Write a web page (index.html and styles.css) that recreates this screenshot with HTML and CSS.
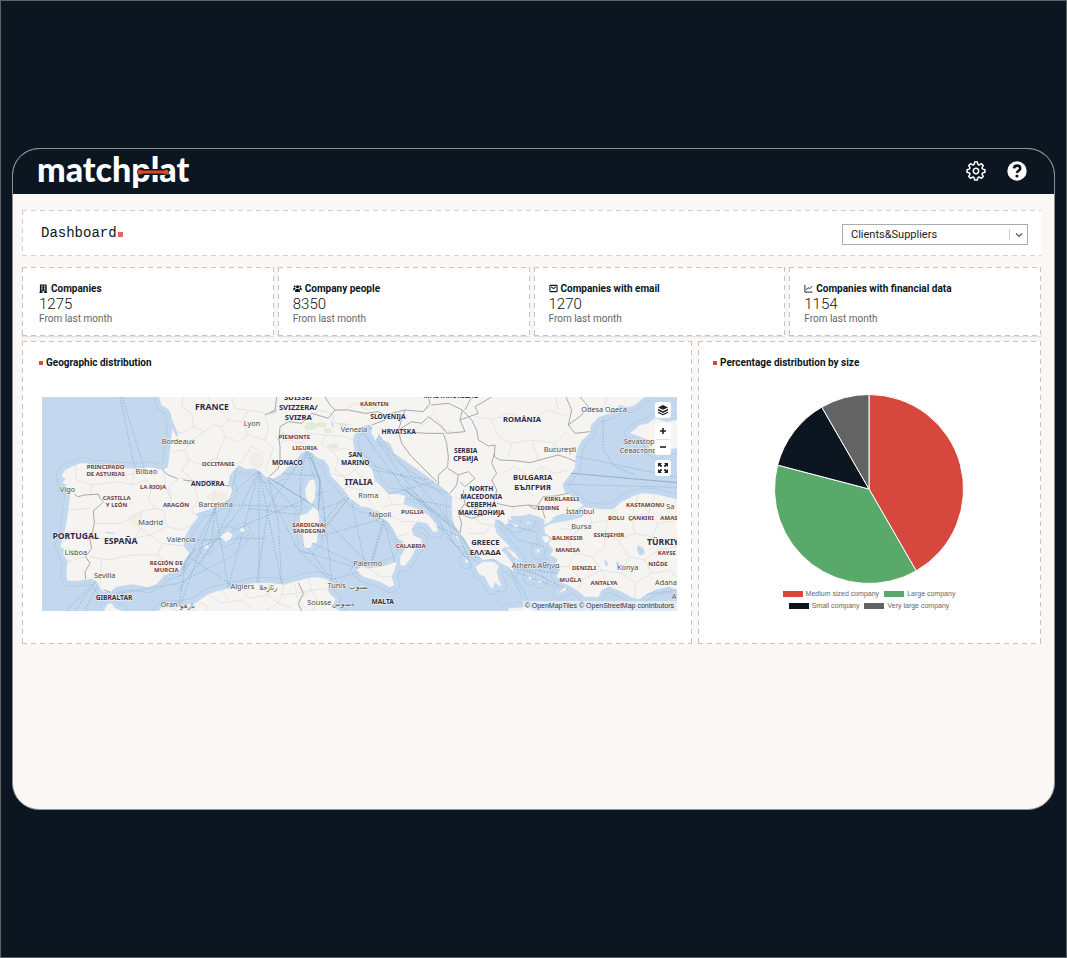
FILE: index.html
```html
<!DOCTYPE html>
<html lang="en">
<head>
<meta charset="utf-8">
<title>Matchplat – Dashboard</title>
<meta name="viewport" content="width=device-width, initial-scale=1">
<link rel="stylesheet" href="styles.css">
</head>
<body>
<div class="window">
  <header class="topbar">
    <a class="logo" href="#">matchplat
      <svg class="logo-link" viewBox="0 0 34 8" aria-hidden="true"><path class="logo-gap" d="M4 4H30"/><path class="logo-bar" d="M4 4H30"/><circle cx="4" cy="4" r="2.6"/><circle cx="30" cy="4" r="2.6"/></svg>
    </a>
    <nav class="tools">
      <button class="tool" type="button" aria-label="Settings">
        <svg viewBox="-10 -10 20 20" class="gear">
          <defs><path id="tooth" d="M-2.6-6.3Q-1.9-6.5-1.7-7.2L-1.3-9H1.3L1.7-7.2Q1.9-6.5 2.6-6.3"/></defs>
          <use href="#tooth"/><use href="#tooth" transform="rotate(45)"/><use href="#tooth" transform="rotate(90)"/><use href="#tooth" transform="rotate(135)"/><use href="#tooth" transform="rotate(180)"/><use href="#tooth" transform="rotate(225)"/><use href="#tooth" transform="rotate(270)"/><use href="#tooth" transform="rotate(315)"/>
          <circle r="2.7"/>
        </svg>
      </button>
      <button class="tool" type="button" aria-label="Help">
        <svg viewBox="-10 -10 20 20"><circle r="9.7" fill="#fff"/><path d="M-3-2.6C-2.8-6.3 3.2-6.3 3.2-2.6C3.2-.2 0-.3 0 2" fill="none" stroke="#0b1620" stroke-width="2.6"/><circle cy="5" r="1.6" fill="#0b1620"/></svg>
      </button>
    </nav>
  </header>

  <main class="content">
    <section class="titlebar dashed">
      <h1 class="page-title">Dashboard<span class="title-dot"></span></h1>
      <div class="picker">
        <select class="picker-select" aria-label="Company list"><option>Clients&amp;Suppliers</option></select>
        <svg class="picker-arrow" viewBox="0 0 20 21" aria-hidden="true"><path d="M1.500 5V16" stroke="#ccc"/><path d="M8 9.500L11 12.500L14 9.500" stroke="#555" stroke-width="1.200"/></svg>
      </div>
    </section>

    <section class="stats">
      <article class="stat dashed">
        <h2 class="label"><svg class="icon" viewBox="0 0 10 10"><path fill-rule="evenodd" d="M1 .5H8.500V9H9V10H5.800V8H3.800V10H.5V9H1ZM2.600 1.800V3H4V1.800ZM5.500 1.800V3H7V1.800ZM2.600 4V5.200H4V4ZM5.500 4V5.200H7V4ZM2.600 6.200V7.300H4V6.200ZM5.500 6.200V7.300H7V6.200Z"/></svg>Companies</h2>
        <p class="value">1275</p><p class="note">From last month</p>
      </article>
      <article class="stat dashed">
        <h2 class="label"><svg class="icon" viewBox="0 0 10 10"><circle cx="5" cy="3" r="1.700"/><circle cx="1.900" cy="2.700" r="1.100"/><circle cx="8.100" cy="2.700" r="1.100"/><path d="M2.300 9V7.200Q2.300 5.200 5 5.200T7.700 7.200V9ZM.2 7V5.600Q.3 4.200 2.500 4.300L3 4.900Q1.700 5.600 1.700 7ZM9.800 7V5.600Q9.700 4.200 7.500 4.300L7 4.900Q8.300 5.600 8.300 7Z"/></svg>Company people</h2>
        <p class="value">8350</p><p class="note">From last month</p>
      </article>
      <article class="stat dashed">
        <h2 class="label"><svg class="icon icon-line" viewBox="0 0 10 10"><rect x="1" y="1.500" width="8" height="7" rx=".6"/><path d="M2.500 3.200L5 5.200L7.500 3.200"/></svg>Companies with email</h2>
        <p class="value">1270</p><p class="note">From last month</p>
      </article>
      <article class="stat dashed">
        <h2 class="label"><svg class="icon icon-line icon-thin" viewBox="0 0 10 10"><path d="M1 1V9H9.500M2.500 6.500L4.500 4L6.300 5.300L9 2.500"/></svg>Companies with financial data</h2>
        <p class="value">1154</p><p class="note">From last month</p>
      </article>
    </section>

    <section class="panels">
      <article class="panel dashed">
        <h2 class="label"><span class="bullet"></span>Geographic distribution</h2>
        <div class="map">
          <svg class="map-canvas" viewBox="21 21 1905 642" preserveAspectRatio="xMidYMid slice" role="img" aria-label="Map of southern Europe">
            <defs>
              <path id="mainland" d="M372 21L380 45L400 58L408 72L412 115L408 150L404 190L398 232L385 240L345 232L300 236L250 232L215 228L170 228L155 220L138 220L115 228L90 240L80 258L92 266L82 278L95 285L90 296L102 298L105 320L100 360L92 410L84 445L76 470L88 478L84 492L98 512L95 535L95 562L98 572L120 573L150 570L170 566L185 575L195 595L205 606L225 606L245 590L290 583L340 592L365 582L390 555L435 540L445 515L464 490L445 468L450 440L470 405L490 380L480 372L540 352L585 325L592 300L580 280L585 255L600 238L612 226L630 236L660 236L675 245L692 262L715 266L740 252L762 228L785 210L798 190L815 183L832 190L850 205L868 210L882 230L885 255L905 275L925 298L945 325L980 350L1000 352L1018 362L1030 362L1040 385L1060 395L1075 418L1088 445L1105 455L1110 478L1096 500L1095 525L1110 528L1130 500L1140 478L1160 465L1160 448L1135 436L1130 418L1145 395L1175 400L1195 425L1208 425L1205 405L1180 375L1150 358L1105 342L1112 318L1090 312L1060 312L1035 285L1020 272L1012 240L985 212L960 190L955 160L955 140L975 112L1000 104L1012 110L1008 128L1022 152L1032 130L1045 150L1065 160L1078 190L1110 212L1150 240L1180 262L1212 285L1240 308L1252 320L1250 350L1252 385L1258 405L1275 432L1290 448L1300 468L1325 495L1345 510L1375 506L1398 520L1418 530L1435 545L1432 520L1412 492L1398 480L1410 470L1425 472L1405 450L1385 430L1378 405L1382 388L1398 392L1410 405L1420 400L1418 385L1432 392L1425 378L1455 378L1485 372L1510 380L1530 390L1525 405L1545 395L1565 378L1600 368L1635 355L1645 345L1620 325L1590 305L1582 285L1600 260L1620 235L1622 200L1630 170L1640 152L1665 130L1668 105L1690 82L1740 65L1755 45L1780 52L1800 45L1818 30L1830 21Z"/>
              <path id="anatolia" d="M1648 352L1700 358L1735 358L1760 335L1795 318L1820 310L1860 312L1926 328V600L1900 590L1860 600L1835 612L1812 628L1790 622L1760 605L1722 590L1700 600L1690 622L1650 620L1625 600L1600 585L1580 578L1565 558L1575 540L1560 525L1568 508L1545 495L1555 480L1540 462L1552 445L1530 430L1528 412L1545 402L1580 395L1620 388L1640 380L1610 372Z"/>
              <path id="africa" d="M370 663L385 648L430 650L480 640L520 612L560 600L600 592L650 580L700 578L745 584L790 572L820 564L850 562L880 570L890 580L876 598L888 615L902 628L892 648L915 663ZM208 663L215 645L228 638L240 655L262 663Z"/>
              <path id="islands" d="M822 272L838 268L842 290L840 325L830 342L815 330L810 300ZM795 375L815 372L835 352L850 362L853 385L848 430L845 458L832 460L825 475L808 472L803 430L795 400ZM965 540L978 530L1000 535L1040 530L1085 515L1078 540L1070 560L1078 585L1065 592L1035 575L985 560ZM555 440L578 424L592 432L588 446L572 455ZM508 470L518 465L520 472L510 478ZM614 418L625 414L630 422L620 426ZM1322 530L1345 515L1375 515L1392 528L1385 545L1390 565L1400 590L1385 582L1380 575L1372 598L1360 582L1350 560L1332 552ZM1264 435L1275 455L1262 442ZM1290 505L1302 515L1292 520ZM1435 505L1460 525L1450 522ZM1410 470L1440 490L1455 512L1435 500ZM1520 440L1538 438L1545 452L1530 458ZM1505 475L1515 480L1508 492ZM1528 522L1545 528L1530 532ZM1480 560L1490 562L1484 570ZM1510 570L1520 575L1512 580ZM1570 610L1590 592L1595 600ZM1420 655L1470 652L1500 660L1490 668L1420 668ZM1785 130L1815 105L1840 100L1860 85L1895 95L1926 90V175L1890 178L1865 190L1845 178L1840 150L1815 140ZM1435 400L1450 410L1440 412ZM1475 395L1485 398L1478 404Z"/>
            </defs>
            <path class="sea" d="M0 0H1950V700H0Z"/>
            <g class="shelf"><use href="#mainland"/><use href="#anatolia"/><use href="#africa"/><use href="#islands"/></g>
            <g class="shelf-fill"><use href="#mainland"/><use href="#anatolia"/><use href="#africa"/><use href="#islands"/></g>
            <g class="ferry">
              <path d="M255 21L300 236M262 21L328 236M180 575L95 663M185 572L120 663M190 580L150 663M605 232L585 330L540 355L430 663M672 240L540 355L445 540M672 240V578M672 240L740 580M672 240L620 350L430 600M672 240L580 590M592 345L800 350M592 345L540 450L490 530M540 355L530 450L430 560M540 355L580 590M480 450L560 448L690 445M462 492L640 400L880 300M462 500L590 585M450 520L430 663M250 610L430 580L590 500L660 430"/>
              <path d="M672 245L835 345M672 245L845 258M680 250L795 370M700 262L730 400L740 580M815 185L795 260L800 370M815 185L838 265M820 185L855 270L850 370M815 185L700 350L665 578M830 190L860 300L890 570M940 325L855 360M940 325L850 440M940 325L820 475M1045 385L855 440M1045 385L1008 520M1050 385L1010 525M1045 390L1080 520M1045 385L1095 470M835 460L980 530M820 475L890 570M990 540L880 572M990 540L790 480M800 375L640 355M670 245L790 480L880 565M850 370L1000 520M950 340L990 520M930 320L800 470"/>
              <path d="M1000 105L1275 430M1005 115L1080 230L1290 500M1010 225L1240 310M1015 240L1180 270M1060 312L1200 275M1090 320L1250 350M985 130L1110 300L1280 420M1115 290L1275 430M1205 405L1300 510M1210 410L1275 440L1310 530M1320 500L1400 515M1400 400L1500 425M1385 390L1450 450L1530 470M1420 530L1570 550M1420 530L1500 550L1600 600M1420 530L1460 620M1430 540L1490 650M1440 545L1560 590M1425 525L1600 540M1705 90L1705 180L1740 230L1800 255M1625 200L1926 262M1590 248L1926 278M1590 283L1926 292M1800 618L1926 600"/>
            </g>
            <g class="ferry-strong"><path d="M672 245L835 345M820 185L855 270L850 370M1110 300L1275 430M464 492L440 540M1590 248L1926 278M1275 430L1310 490"/></g>
            <g class="land"><use href="#mainland"/><use href="#anatolia"/><use href="#africa"/><use href="#islands"/></g>
            <g class="green"><ellipse cx="828" cy="108" rx="18" ry="12"/><ellipse cx="860" cy="104" rx="15" ry="7"/><ellipse cx="895" cy="168" rx="16" ry="8"/><ellipse cx="878" cy="122" rx="12" ry="7"/><ellipse cx="925" cy="105" rx="14" ry="6"/></g>
            <g class="city-area"><ellipse cx="300" cy="390" rx="15" ry="22"/><ellipse cx="545" cy="320" rx="35" ry="14"/><ellipse cx="665" cy="210" rx="22" ry="25"/></g>
            <path class="water" d="M700 75L715 62L728 58L722 68ZM888 92L893 95L897 115L890 108ZM1165 62L1190 45L1195 35L1180 55ZM1810 465L1825 475L1830 490L1815 497L1805 480ZM1710 508L1720 520L1716 532L1708 520ZM1740 520L1752 515L1750 530ZM210 425L240 428L238 432L212 430ZM408 80L430 135L425 140L412 118ZM1548 385L1580 372L1620 365L1650 372L1640 382L1600 390Z"/>
            <g class="province">
              <path d="M412 120L440 130L475 110L470 70L440 50L445 21M475 110L510 125L530 105L560 110L580 90L560 60L530 55L520 21M580 90L620 95L640 60L690 70M560 110L570 140L610 155L640 135L690 150M410 185L450 180L470 150L510 125M450 180L460 210L500 225L545 205L570 140M545 205L590 225L620 215L650 170L690 190M460 210L440 240L470 268M620 95L640 135M690 70L700 120L690 150L715 175L690 240M590 21L600 55L640 60"/>
              <path d="M120 225L125 270L170 285L165 310M170 285L250 275L290 285L300 236M165 250L230 262L300 250M290 285L335 270L350 290L370 280L395 300L385 240M350 290L340 330L360 355L320 365L260 400L185 400M335 270L320 250M395 300L410 330L385 360L395 410L440 420L470 405M360 355L385 360M410 330L400 290L440 262M320 365L310 410L345 435L395 410M170 440L230 450L300 445L345 435L380 460L445 468M380 460L370 495L400 530L445 515M165 500L220 510L290 495L370 495M400 530L380 565M98 360L165 355M92 425L145 425L160 440M98 515L150 500M440 262L480 290L490 330L470 360L480 375M540 300L530 350M200 510L195 595M300 445L320 410"/>
              <path d="M785 80L830 85L850 60L890 70L900 100L950 105M730 160L760 150L800 160L820 130L870 135L930 140L955 150M800 160L790 190M820 130L790 80M885 185L930 175L960 190M870 135L860 160L895 185L910 210L900 240L930 260L960 240L985 212M885 250L930 260L940 290L920 300M960 240L985 265L1010 265M940 290L980 300L1000 330L1035 310M1000 330L1020 360M1060 312L1070 345L1110 342M1040 380L1075 380L1100 395L1140 395M1070 345L1045 350M1085 440L1120 430M1095 470L1140 475M930 60L960 40L1000 60L1030 50M800 400H850M1000 535L1040 560L1070 560M1150 110L1180 95L1200 60"/>
              <path d="M1320 80L1370 90L1420 70L1480 90L1540 60L1600 80M1370 90L1390 140L1430 160L1490 150L1560 160L1600 120M1430 160L1420 200M1490 150L1510 210M1560 160L1570 200M1400 250L1440 230L1480 260L1520 230L1560 250L1600 240M1480 260L1470 300L1500 320M1520 230L1540 290M1310 380L1340 400L1380 410M1300 430L1350 430L1370 400M1310 470L1360 460L1390 480M1440 370L1430 350M1200 80L1230 120L1270 130M1255 200L1310 210M1260 320L1300 340M1720 21L1700 60M1560 21L1570 60"/>
              <path d="M1660 360L1670 400L1630 420L1570 415M1670 400L1720 390L1740 360M1720 390L1710 430L1750 450L1800 430L1790 380L1810 315M1790 380L1840 370L1860 315M1840 370L1870 400L1926 390M1870 400L1850 440L1800 430M1850 440L1870 480L1926 470M1870 480L1830 510L1850 550L1900 540L1926 560M1830 510L1780 500L1750 450M1780 500L1760 550L1800 580L1850 550M1760 550L1700 540L1670 500L1710 470L1710 430M1670 500L1620 490L1600 450L1630 420M1620 490L1600 530L1565 530M1600 530L1640 570L1700 540M1640 570L1630 600M1700 540L1720 590M1800 580L1800 620M1600 450L1550 450"/>
              <path d="M400 650L430 663M450 645L480 663M490 635L520 650L510 663M520 612L560 640L620 630L650 655M560 600L580 630M620 590L640 625L700 615L730 640L690 663M700 580V615M745 584L740 615L780 610L800 640M740 615L730 640L770 655M820 564L830 600L800 620M830 600L870 595M830 600L850 640L890 640M850 640L830 663M800 640L820 663M780 580L785 610L830 600"/>
            </g>
            <g class="border">
              <path d="M118 312L128 320L150 315L190 312L195 325L205 335L190 350L175 362L178 400L172 430L165 450L170 475L152 500L165 520L150 545L152 568M382 240L400 255L428 266M445 270L490 275L540 272L560 285L585 288M700 262L730 235L735 205L735 170L732 150L735 110L760 95L800 100L830 70L880 85L900 60L940 60L990 70L1030 65L1050 75L1050 90L1010 105M690 75L720 60L725 21M728 150L745 130M870 21L885 45L900 60M1050 75L1110 60L1165 65L1185 40L1180 21M1110 60L1090 120L1045 125M1090 120L1130 95L1160 100L1180 80L1220 110L1235 130L1290 125L1275 90L1282 60L1240 40L1190 45M1092 130L1100 160L1130 200L1170 240L1205 275M1095 130L1140 128L1180 130L1225 130L1235 160L1240 200L1238 230L1210 255L1210 285M1238 235L1270 255L1265 285L1245 310M1270 255L1300 245L1320 265L1290 290L1275 275M1285 300L1290 340L1270 370L1280 400L1275 430M1290 345L1320 355L1375 345L1385 300L1370 270M1270 370L1310 385L1345 375L1375 345M1282 60L1310 90L1325 120L1330 150L1360 168L1380 165L1378 200L1395 210L1440 212L1485 218L1520 208L1570 195L1600 205L1622 215M1378 190L1370 220L1385 250L1370 270M1385 340L1430 350L1480 345L1500 358L1525 320L1560 318L1600 310M1480 345L1520 350L1530 385M1593 21L1610 60L1600 105L1620 130L1665 125M1600 105L1640 75L1660 50L1635 21M1275 90L1330 70L1320 50L1370 21"/>
              <path d="M790 578L805 610L790 640L800 663M205 600L225 606M1310 20L1290 60"/>
            </g>
            <g class="country">
              <text class="big" x="531" y="59">FRANCE</text><text class="big" x="122" y="446">PORTUGAL</text><text class="big" x="257" y="463">ESPAÑA</text><text class="big" x="971" y="284">ITALIA</text>
              <text x="237" y="629">GIBRALTAR</text><text x="518" y="288">ANDORRA</text><text x="757" y="225">MONACO</text>
              <text class="mid" x="790" y="31">SUISSE/</text><text class="mid" x="790" y="60">SVIZZERA/</text><text class="mid" x="790" y="91">SVIZRA</text>
              <text x="961" y="201">SAN</text><text x="961" y="225">MARINO</text><text x="1059" y="86">SLOVENIJA</text><text x="1091" y="131">HRVATSKA</text><text x="1043" y="641">MALTA</text><text x="1248" y="24">MAGYARORSZÁG</text>
              <text x="1292" y="189">SERBIA</text><text x="1292" y="213">СРБИЈА</text><text class="mid" x="1461" y="95">ROMÂNIA</text>
              <text class="mid" x="1493" y="271">BULGARIA</text><text class="mid" x="1493" y="299">БЪЛГРИЯ</text>
              <text x="1339" y="302">NORTH</text><text x="1339" y="327">MACEDONIA</text><text x="1339" y="351">СЕВЕРНА</text><text x="1339" y="375">МАКЕДОНИЈА</text>
              <text class="mid" x="1351" y="466">GREECE</text><text class="mid" x="1351" y="496">ΕΛΛΆΔΑ</text><text class="big" x="1836" y="466" text-anchor="start">TÜRKIYE</text>
            </g>
            <g class="region">
              <text x="212" y="238">PRINCIPADO</text><text x="212" y="257">DE ASTURIAS</text><text x="354" y="298">LA RIOJA</text><text x="245" y="331">CASTILLA</text><text x="245" y="350">Y LEÓN</text><text x="423" y="351">ARAGÓN</text><text x="550" y="228">OCCITANIE</text><text x="394" y="526">REGIÓN DE</text><text x="394" y="545">MURCIA</text>
              <text x="1018" y="47">KÄRNTEN</text><text x="778" y="147">PIEMONTE</text><text x="809" y="181">LIGURIA</text><text x="823" y="410">SARDIGNA/</text><text x="823" y="430">SARDEGNA</text><text x="1132" y="372">PUGLIA</text><text x="1127" y="475">CALABRIA</text>
              <text x="1580" y="332">KIRKLARELI</text><text x="1540" y="361">EDIRNE</text><text x="1831" y="351">KASTAMONU</text><text x="1744" y="391">BOLU</text><text x="1818" y="389">ÇANKIRI</text><text x="1876" y="389" text-anchor="start">AMAS</text><text x="1597" y="449">BALIKESIR</text><text x="1722" y="442">ESKIŞEHIR</text><text x="1598" y="486">MANISA</text><text x="1647" y="540">DENIZLI</text><text x="1606" y="575">MUĞLA</text><text x="1707" y="586">ANTALYA</text><text x="1869" y="528">NIĞDE</text><text x="1868" y="496" text-anchor="start">KAYSE</text>
            </g>
            <g class="city">
              <text x="651" y="108">Lyon</text><text x="430" y="162">Bordeaux</text><text x="334" y="252">Bilbao</text><text x="98" y="305">Vigo</text><text x="542" y="352">Barcelona</text><text x="347" y="404">Madrid</text><text x="438" y="455">València</text><text x="123" y="495">Lisboa</text><text x="209" y="565">Sevilla</text>
              <text x="402" y="651">Oran</text><text x="458" y="654">نارهو</text><text x="622" y="597">Algiers</text><text x="700" y="600">رئازجلا</text><text x="905" y="595">Tunis</text><text x="969" y="598">سنوت</text><text x="853" y="644">Sousse</text><text x="925" y="647">ةسوس</text>
              <text x="957" y="127">Venezia</text><text x="1000" y="323">Roma</text><text x="1035" y="382">Napoli</text><text x="998" y="527">Palermo</text>
              <text x="1707" y="65">Odesa Одеса</text><text x="1575" y="186">București</text><text x="1766" y="162" text-anchor="start">Sevastop</text><text x="1754" y="189" text-anchor="start">Севастопо</text><text x="1635" y="373">İstanbul</text><text x="1639" y="417">Bursa</text><text x="1502" y="534">Athens Αθήνα</text><text x="1778" y="540">Konya</text><text x="1893" y="586">Adana</text><text x="1894" y="356" text-anchor="start">Sa</text><text x="1910" y="626" text-anchor="start">A</text>
            </g>
          </svg>
          <div class="map-controls">
            <button class="map-btn" type="button" aria-label="Layers"><svg viewBox="0 0 16 16"><path d="M8 3L13 5.400L8 7.800L3 5.400ZM3 6.800L8 9.200L13 6.800V8.500L8 10.900L3 8.500ZM3 9.800L8 12.100L13 9.800V10.900L8 13.300L3 10.900Z"/></svg></button>
            <div class="map-zoom">
              <button class="map-btn" type="button" aria-label="Zoom in"><svg viewBox="0 0 16 16"><path d="M7.200 5H8.800V7.200H11V8.800H8.800V11H7.200V8.800H5V7.200H7.200Z"/></svg></button>
              <button class="map-btn" type="button" aria-label="Zoom out"><svg viewBox="0 0 16 16"><path d="M5 6.200H11V7.800H5Z"/></svg></button>
            </div>
            <button class="map-btn" type="button" aria-label="Full screen"><svg viewBox="0 0 16 16"><path d="M3 3H7L5.700 4.300L7.300 6L6 7.300L4.300 5.700L3 7ZM13 3V7L11.700 5.700L10 7.300L8.700 6L10.300 4.300L9 3ZM3 13V9L4.300 10.300L6 8.700L7.300 10L5.700 11.700L7 13ZM13 13H9L10.300 11.700L8.700 10L10 8.700L11.700 10.300L13 9Z"/></svg></button>
          </div>
          <p class="map-credit"><a href="#">© OpenMapTiles</a> <a href="#">© OpenStreetMap contributors</a></p>
        </div>
      </article>

      <article class="panel panel-chart dashed">
        <h2 class="label"><span class="bullet"></span>Percentage distribution by size</h2>
        <svg class="pie" viewBox="-95 -95 190 190" role="img" aria-label="Share of companies by size">
          <path fill="#d6483d" d="M0 0V-94.500A94.500 94.500 0 0 1 47.200 81.900Z"/>
          <path fill="#59a96a" d="M0 0L47.200 81.900A94.500 94.500 0 0 1 -91.400 -23.900Z"/>
          <path fill="#0b1620" d="M0 0L-91.400 -23.900A94.500 94.500 0 0 1 -47.200 -81.900Z"/>
          <path fill="#636363" d="M0 0L-47.200 -81.900A94.500 94.500 0 0 1 0 -94.500Z"/>
        </svg>
        <ul class="legend">
          <li><span class="swatch red"></span>Medium sized company</li><li><span class="swatch green-sw"></span>Large company</li>
        </ul>
        <ul class="legend">
          <li><span class="swatch navy"></span>Small company</li><li><span class="swatch grey"></span>Very large company</li>
        </ul>
      </article>
    </section>
  </main>
</div>
</body>
</html>
```
FILE: styles.css
```css
* { box-sizing: border-box; }
body {
  margin: 0;
  min-height: 100vh;
  padding: 11px;
  display: flex;
  align-items: center;
  background: #0b1620;
  border: 1px solid #5d6166;
  color: #0b1620;
  font-family: Roboto, "Liberation Sans", sans-serif;
}
h1, h2, p, ul { margin: 0; padding: 0; }
button { padding: 0; border: 0; background: none; cursor: pointer; }
a { color: inherit; text-decoration: none; }

.window {
  flex: 1;
  min-height: 662px;
  border: 1px solid #8d9196;
  border-radius: 27px;
  overflow: hidden;
  background: #fbf7f4;
}
.topbar {
  display: flex;
  align-items: center;
  justify-content: space-between;
  height: 45px;
  padding: 0 27px 2px 24px;
  background: #0b1620;
}
.logo {
  position: relative;
  margin-bottom: 4px;
  color: #fff;
  font: 900 34px/40px Lato, "Open Sans", sans-serif;
}
.logo-link {
  position: absolute;
  right: 19px;
  top: 19px;
  width: 34px;
  height: 8px;
  overflow: visible;
  fill: #d9482b;
}
.logo-gap { stroke: #0b1620; stroke-width: 6; stroke-linecap: round; }
.logo-bar { stroke: #d9482b; stroke-width: 3; }
.tools { display: flex; gap: 21px; }
.tool { display: flex; width: 20px; height: 20px; }
.tool svg { width: 20px; height: 20px; }
.gear { fill: none; stroke: #fff; stroke-width: 1.5; stroke-linecap: round; stroke-linejoin: round; }

.content { padding: 16px 13px 16px 9px; }
.dashed {
  --dash: #c4c4c4;
  --dash-right: var(--dash);
  background:
    repeating-linear-gradient(90deg, var(--dash) 0 5px, transparent 5px 9px) 0 0 / 100% 1px no-repeat,
    repeating-linear-gradient(90deg, var(--dash) 0 5px, transparent 5px 9px) 0 100% / 100% 1px no-repeat,
    repeating-linear-gradient(var(--dash) 0 5px, transparent 5px 9px) 0 0 / 1px 100% no-repeat,
    repeating-linear-gradient(var(--dash-right) 0 5px, transparent 5px 9px) 100% 0 / 1px 100% no-repeat,
    #fff;
}

.titlebar {
  --dash: #d3d0ce;
  --dash-right: transparent;
  display: flex;
  align-items: center;
  justify-content: space-between;
  height: 46px;
  padding: 2px 13px 0 19px;
}
.page-title { margin-bottom: 2px; font: 400 14px/20px "Liberation Mono", monospace; }
.title-dot {
  display: inline-block;
  width: 5px;
  height: 5px;
  margin-left: 1px;
  background: #e06666;
}
.picker { position: relative; width: 186px; }
.picker-select {
  display: block;
  width: 100%;
  height: 21px;
  padding: 0 24px 0 8px;
  appearance: none;
  background: #fff;
  border: 1px solid #a9adb0;
  border-radius: 0;
  color: #222;
  font: 400 11px/19px Roboto, sans-serif;
}
.picker-arrow {
  position: absolute;
  right: 0;
  top: 0;
  width: 20px;
  height: 21px;
  fill: none;
  pointer-events: none;
}

.stats {
  display: grid;
  grid-template-columns: repeat(4, 1fr);
  gap: 4px;
  margin-top: 11px;
}
.stat { padding: 14px 17px 10px; box-shadow: 0 1px 1px #e4e0dd; }
.stat + .stat { padding-left: 15px; }
.label {
  display: flex;
  align-items: center;
  font-size: 10px;
  font-weight: 700;
  line-height: 15px;
}
.icon { width: 9px; height: 9px; margin-right: 3px; fill: #0b1620; }
.icon-line { fill: none; stroke: #0b1620; stroke-width: 1.2; }
.icon-thin { stroke-width: 1; }
.value { font-size: 15px; font-weight: 300; line-height: 16px; color: #111; }
.note { font-size: 10px; line-height: 14px; color: #666; }

.panels {
  display: grid;
  grid-template-columns: 670fr 343fr;
  gap: 6px;
  margin-top: 5px;
}
.panel { padding: 14px 15px 33px 17px; }
.panel-chart { padding: 14px 16px 16px 15px; }
.bullet { width: 4px; height: 4px; margin-right: 3px; background: #d9483b; }
.map {
  position: relative;
  aspect-ratio: 635 / 214;
  margin: 27px 0 0 3px;
  overflow: hidden;
}
.map-canvas { display: block; width: 100%; height: 100%; }
.sea, .water { fill: #c3d8ee; }
.land { fill: #f5f4f0; }
.shelf { fill: none; stroke: #adc7e4; stroke-width: 34; stroke-linejoin: round; }
.shelf-fill { fill: none; stroke: #c3d8ee; stroke-width: 30; stroke-linejoin: round; }
.ferry { fill: none; stroke: #82aac2; stroke-width: 2; stroke-dasharray: 5 4; }
.ferry-strong { fill: none; stroke: #84acc4; stroke-width: 2; }
.green { fill: #dfecd6; }
.city-area { fill: #f1ede7; }
.province { fill: none; stroke: #dddbdc; stroke-width: 2; stroke-linejoin: round; }
.border { fill: none; stroke: #aaa7b3; stroke-width: 3; stroke-linejoin: round; }
.map-canvas text {
  font-family: "Noto Sans", sans-serif;
  text-anchor: middle;
  paint-order: stroke;
  stroke: #f8f7f4;
  stroke-width: 3px;
  stroke-linejoin: round;
}
.map-canvas text[text-anchor="start"] { text-anchor: start; }
.country { fill: #2d2b48; font-size: 20px; font-weight: 700; }
.country .mid { font-size: 23px; }
.country .big { font-size: 26px; }
.region { fill: #703c3e; font-size: 18px; font-weight: 700; }
.city { fill: #4c4c4c; font-size: 22px; }

.map-controls {
  position: absolute;
  top: 5px;
  right: 6px;
  display: flex;
  flex-direction: column;
  gap: 5px;
}
.map-btn {
  display: block;
  width: 16px;
  height: 16px;
  background: #fff;
  border-radius: 3px;
}
.map-btn svg { display: block; width: 16px; height: 16px; fill: #222; }
.map-zoom { background: #fff; border-radius: 3px; }
.map-zoom .map-btn + .map-btn { border-top: 1px solid #ddd; }
.map-credit {
  position: absolute;
  right: 0;
  bottom: 0;
  padding: 0 3px 0 2px;
  background: rgba(255, 255, 255, .5);
  color: #333;
  font: 400 7px/10px "Liberation Sans", sans-serif;
}

.pie {
  display: block;
  width: 190px;
  height: 190px;
  margin: 24px auto 4px;
  stroke: #fff;
  stroke-width: 1;
}
.legend {
  display: flex;
  justify-content: center;
  gap: 5px;
  list-style: none;
  color: #666;
  font: 400 7px/12px "Liberation Sans", sans-serif;
}
.legend li { display: flex; align-items: center; gap: 3px; }
.swatch { width: 20px; height: 6px; }
.red { background: #d6483d; }
.green-sw { background: #59a96a; }
.navy { background: #0b1620; }
.grey { background: #636363; }
```
